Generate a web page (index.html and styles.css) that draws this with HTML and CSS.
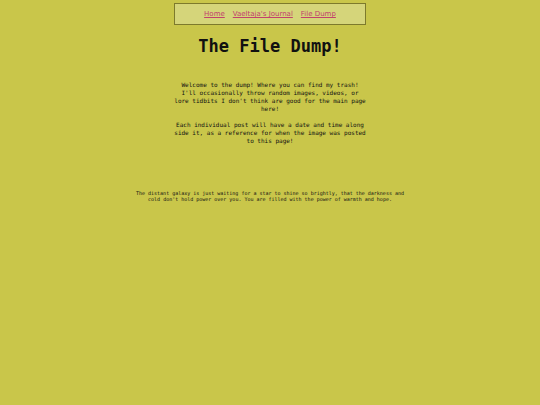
FILE: index.html
```html
<!DOCTYPE html>
<html>
<head>
<meta charset="utf-8">
<link rel="stylesheet" href="styles.css">
</head>
<body>
<nav class="nav">
  <a href="#">Home</a>
  <a href="#">Vaeltaja's Journal</a>
  <a href="#">File Dump</a>
</nav>
<h1 class="title">The File Dump!</h1>
<div class="intro">
  <p>Welcome to the dump! Where you can find my trash! I'll occasionally throw random images, videos, or lore tidbits I don't think are good for the main page here!</p>
  <p>Each individual post will have a date and time along side it, as a reference for when the image was posted to this page!</p>
</div>
<p class="quote">The distant galaxy is just waiting for a star to shine so brightly, that the darkness and cold don't hold power over you. You are filled with the power of warmth and hope.</p>
</body>
</html>
```
FILE: styles.css
```css
html, body {
  margin: 0;
  padding: 0;
  background: #c9c64a;
}
body {
  font-family: "DejaVu Sans Mono", monospace;
  color: #111;
  padding-top: 3px;
}
.nav {
  width: 190px;
  height: 20px;
  margin: 0 auto;
  background: #d5d57a;
  border: 1px solid #7d7a2c;
  display: flex;
  justify-content: center;
  align-items: center;
  gap: 8px;
  font-family: "DejaVu Sans", sans-serif;
  font-size: 7px;
}
.nav a {
  color: #c2416c;
  text-decoration: underline;
}
.title {
  text-align: center;
  font-size: 17px;
  font-weight: bold;
  margin: 11px 0 0 0;
  line-height: 20px;
}
.intro {
  width: 194px;
  margin: 25px auto 0;
  text-align: center;
  font-size: 6px;
  line-height: 8px;
}
.intro p {
  margin: 0 0 8px 0;
}
.quote {
  width: 278px;
  margin: 45px auto 0;
  text-align: center;
  font-size: 5px;
  line-height: 6px;
}
```
